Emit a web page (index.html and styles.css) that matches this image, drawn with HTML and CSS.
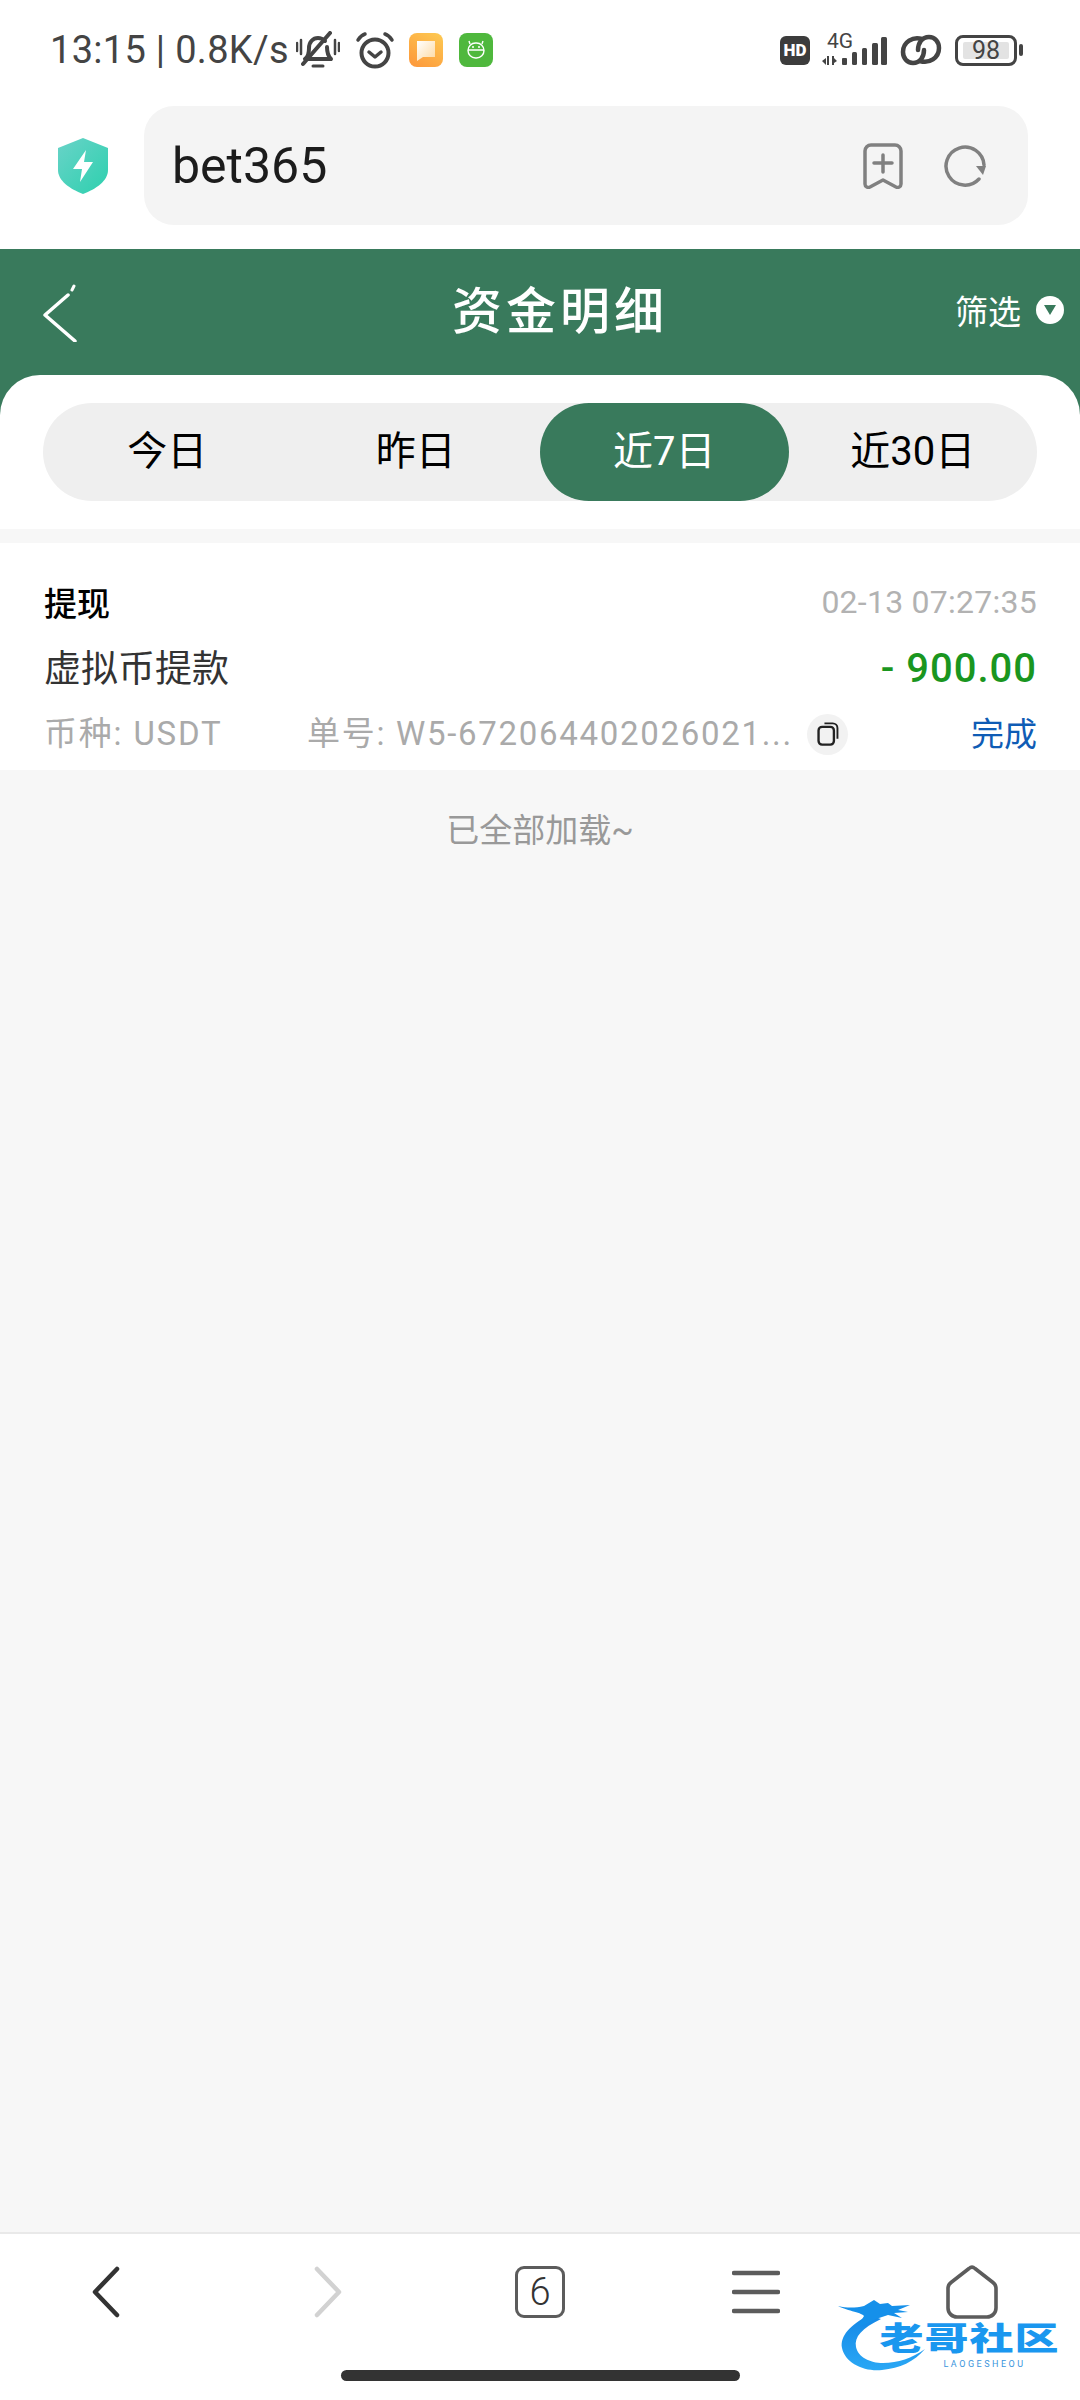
FILE: index.html
```html
<!DOCTYPE html>
<html>
	<head>
		<meta charset="utf-8">
		<title>资金明细</title>
		<link rel="stylesheet" href="styles.css">
	</head>
	<body>
		<div class="status-bar">
			<span class="status-text">13:15 | 0.8K/s</span>
			<svg class="ic-bell" viewBox="0 0 44 38" fill="none" stroke="#444" stroke-width="4" stroke-linecap="round" stroke-linejoin="round">
				<path d="M9 28c3-2 4-5 4-11 0-6 4-10 9-10 3 0 5 1 7 3"/>
				<path d="M31 16c0 6 1 9 4 12H11"/>
				<path d="M34 2 7 33"/>
				<path d="M17 35h10" stroke-width="3"/>
				<path d="M1 12v8M5 9v14M39 9v14M43 12v8" stroke-width="2.5"/>
			</svg>
			<svg class="ic-alarm" viewBox="0 0 40 38" fill="none" stroke="#444" stroke-linecap="round" stroke-linejoin="round">
				<circle cx="20" cy="22" r="13.5" stroke-width="4"/>
				<path d="m14 21 6 5 6-5" stroke-width="3.5"/>
				<path d="M3 9c2-3 4-5 7-6M37 9c-2-3-4-5-7-6" stroke-width="3.5"/>
			</svg>
			<svg class="ic-note" viewBox="0 0 34 34">
				<defs>
					<linearGradient id="noteBg" x1="0.8" y1="0" x2="0.2" y2="1">
						<stop offset="0" stop-color="#fdc650"/>
						<stop offset="1" stop-color="#fd9a3c"/>
					</linearGradient>
					<linearGradient id="noteFg" x1="0" y1="0" x2="1" y2="1">
						<stop offset="0" stop-color="#fff"/>
						<stop offset="1" stop-color="#fdd9a0"/>
					</linearGradient>
				</defs>
				<rect width="34" height="34" rx="8" fill="url(#noteBg)"/>
				<path d="M8 8h18v16H14l-6 4z" fill="url(#noteFg)"/>
			</svg>
			<svg class="ic-droid" viewBox="0 0 34 34" fill="none" stroke="#fff" stroke-width="1.4">
				<rect width="34" height="34" rx="8" fill="#4fb83d" stroke="none"/>
				<rect x="9" y="10" width="16" height="15" rx="7.5"/>
				<path d="M9 17h16M11 11 10 8M23 11l1-3"/>
				<circle cx="14" cy="14" r="1" fill="#fff" stroke="none"/>
				<circle cx="20" cy="14" r="1" fill="#fff" stroke="none"/>
			</svg>
			<div class="status-right">
				<span class="hd-badge">HD</span>
				<div class="signal">
					<span class="signal-label">4G</span>
					<svg class="ic-signal" viewBox="0 0 67 34" fill="#444">
						<path d="M0 27l4-3v7zM5 22h2v9H5zM10 22h2v9h-2zM12 24l3 3-3 2z"/>
						<rect x="20" y="24" width="5" height="7" rx="1"/>
						<rect x="30" y="18" width="5" height="13" rx="1.5"/>
						<rect x="40" y="14" width="5" height="17" rx="1.5"/>
						<rect x="50" y="9" width="6" height="22" rx="1.5"/>
						<rect x="59" y="3" width="6" height="28" rx="1.5"/>
					</svg>
				</div>
				<svg class="ic-link" viewBox="0 0 42 32" fill="none" stroke="#444" stroke-width="4.5" stroke-linecap="round">
					<path d="M22 5C13 2 3 8 3 18c0 6 4 11 10 11 7 0 11-6 11-13"/>
					<path d="M20 27c9 3 19-3 19-13 0-6-4-11-10-11-7 0-11 6-11 13"/>
				</svg>
				<div class="battery">
					<div class="battery-body"><span class="battery-level">98</span></div>
					<span class="battery-tip"></span>
				</div>
			</div>
		</div>

		<div class="url-row">
			<svg class="ic-shield" viewBox="0 0 50 56">
				<defs>
					<linearGradient id="shieldBg" x1="0" y1="0" x2="1" y2="1">
						<stop offset="0" stop-color="#69d3c8"/>
						<stop offset="1" stop-color="#2dd0ae"/>
					</linearGradient>
				</defs>
				<path d="M25 0 50 10v22c0 11-12 19-25 24C12 51 0 43 0 32V10z" fill="url(#shieldBg)"/>
				<path d="M28 12 15 31h9l-2 13 13-20h-9z" fill="#fff"/>
			</svg>
			<div class="url-box">
				<span class="url-text">bet365</span>
				<svg class="ic-bookmark" viewBox="0 0 40 46" fill="none" stroke="#808080" stroke-width="3.5" stroke-linecap="round" stroke-linejoin="round">
					<path d="M8 2h24a6 6 0 0 1 6 6v33c0 3-3 4-5 3l-13-7-13 7c-2 1-5 0-5-3V8a6 6 0 0 1 6-6z"/>
					<path d="M20 12v17M11 20h18"/>
				</svg>
				<svg class="ic-reload" viewBox="0 0 44 44" fill="none" stroke="#808080" stroke-width="3.5" stroke-linecap="round">
					<path d="M36 35A19 19 0 1 1 41 21"/>
					<path d="M33 22h10l-3 9z" fill="#808080" stroke="none"/>
				</svg>
			</div>
		</div>

		<div class="page-head">
			<svg class="ic-head-back" viewBox="0 0 34 58" fill="none" stroke="#fff" stroke-width="3.5" stroke-linecap="round" stroke-linejoin="round">
				<path d="M25 11 2 31l30 26"/>
				<path d="M29 6 31 2" stroke-width="3"/>
			</svg>
			<h1 class="page-title">资金明细</h1>
			<div class="filter">
				<span>筛选</span>
				<span class="filter-dot"><i class="filter-arrow"></i></span>
			</div>
		</div>

		<div class="tab-panel">
			<div class="tabs">
				<span class="tab">今日</span>
				<span class="tab">昨日</span>
				<span class="tab active">近7日</span>
				<span class="tab">近30日</span>
			</div>
		</div>

		<div class="content">
			<div class="record">
				<div class="record-row">
					<span class="record-type">提现</span>
					<span class="record-time">02-13 07:27:35</span>
				</div>
				<div class="record-row">
					<span class="record-name">虚拟币提款</span>
					<span class="record-amount">- 900.00</span>
				</div>
				<div class="record-row">
					<span class="record-coin">币种: USDT</span>
					<span class="record-no">单号: W5-672064402026021...</span>
					<span class="copy-btn">
						<svg viewBox="0 0 20 22" fill="none" stroke="#222" stroke-width="2">
							<rect x="2" y="5" width="13" height="15" rx="3"/>
							<path d="M7 2h7a4 4 0 0 1 4 4v9" stroke-width="1.6"/>
						</svg>
					</span>
					<span class="record-state">完成</span>
				</div>
			</div>
			<div class="load-end">已全部加载~</div>
		</div>

		<div class="bottom-nav">
			<div class="nav-icons">
				<span class="nav-item">
					<svg class="ic-prev" viewBox="0 0 28 52" fill="none" stroke="#333" stroke-width="4.5" stroke-linecap="round" stroke-linejoin="round"><path d="M25 3 3 26l22 23"/></svg>
				</span>
				<span class="nav-item">
					<svg class="ic-next" viewBox="0 0 28 52" fill="none" stroke="#d2d2d2" stroke-width="4.5" stroke-linecap="round" stroke-linejoin="round"><path d="m3 3 22 23L3 49"/></svg>
				</span>
				<span class="nav-item"><span class="tab-count">6</span></span>
				<span class="nav-item">
					<svg class="ic-menu" viewBox="0 0 48 44" fill="none" stroke="#5c5c5c" stroke-width="4.5" stroke-linecap="round"><path d="M2 3h44M2 22h44M2 41h44"/></svg>
				</span>
				<span class="nav-item">
					<svg class="ic-home" viewBox="0 0 52 54" fill="none" stroke="#5c5c5c" stroke-width="3.6" stroke-linejoin="round"><path d="M23 3.5c2-1.700 4-1.700 6 0l18 14c2 1.500 3 3.500 3 6V43a9 9 0 0 1-9 9H11a9 9 0 0 1-9-9V23.500c0-2.500 1-4.500 3-6z"/></svg>
				</span>
			</div>
			<div class="home-bar"></div>
			<div class="watermark">
				<svg class="dragon" viewBox="0 0 222 74">
					<defs>
						<linearGradient id="dragonBg" x1="0" y1="0" x2="0" y2="1">
							<stop offset="0" stop-color="#1487e6"/>
							<stop offset="1" stop-color="#2aa8f5"/>
						</linearGradient>
					</defs>
					<path d="M31 17C12 27 2 38 4 50c3 15 22 24 40 22 18-2 32-8 43-21-13 9-27 14-42 14-13 0-25-6-27-16-2-10 6-19 25-28z" fill="url(#dragonBg)"/>
					<path d="M0 8c9 2 17 2 26 0l10-6 6 4 8-1 4 3 18-1-12 5 10 2-14 1 8 5-14-3-12 4-12 6-6 1 6-10C25 15 10 13 0 8z" fill="#1590ea"/>
				</svg>
				<div class="wm-text">
					<span class="wm-name">老哥社区</span>
					<span class="wm-sub">LAOGESHEOU</span>
				</div>
			</div>
		</div>
	</body>
</html>
```

FILE: styles.css
```css
* {
	margin: 0;
	padding: 0;
	box-sizing: border-box;
}

body {
	width: 1080px;
	height: 2400px;
	display: flex;
	flex-direction: column;
	background-color: #fff;
	font-family: "Roboto", "Noto Sans CJK SC", sans-serif;
	overflow: hidden;
}

svg {
	display: block;
	flex: none;
}

/* status bar */
.status-bar {
	height: 100px;
	display: flex;
	align-items: center;
	padding: 0 57px 0 50px;
}

.status-text {
	font-size: 38px;
	line-height: 100px;
	letter-spacing: 0.3px;
	color: #444;
	width: 246px;
	white-space: nowrap;
}

.ic-bell {
	width: 44px;
	height: 38px;
}

.ic-alarm {
	width: 40px;
	height: 38px;
	margin-left: 15px;
}

.ic-note {
	width: 34px;
	height: 34px;
	margin-left: 14px;
}

.ic-droid {
	width: 34px;
	height: 34px;
	margin-left: 16px;
}

.status-right {
	margin-left: auto;
	display: flex;
	align-items: center;
}

.hd-badge {
	width: 30px;
	height: 29px;
	border-radius: 6px;
	background-color: #3c3c3c;
	color: #fff;
	font-size: 17px;
	font-weight: 900;
	line-height: 29px;
	text-align: center;
}

.signal {
	position: relative;
	width: 67px;
	height: 36px;
	margin-left: 12px;
}

.signal-label {
	position: absolute;
	left: 5px;
	top: -1px;
	font-size: 21px;
	line-height: 20px;
	color: #444;
}

.ic-signal {
	width: 67px;
	height: 34px;
	margin-top: 2px;
}

.ic-link {
	width: 42px;
	height: 32px;
	margin-left: 11px;
}

.battery {
	display: flex;
	align-items: center;
	margin-left: 13px;
}

.battery-body {
	width: 62px;
	height: 31px;
	border: 3px solid #444;
	border-radius: 8px;
	padding: 4px 5px;
}

.battery-level {
	display: block;
	height: 17px;
	background-color: #e3e3e3;
	border-radius: 2px;
	font-size: 25px;
	line-height: 17px;
	color: #444;
	text-align: center;
}

.battery-tip {
	width: 4px;
	height: 12px;
	margin-left: 2px;
	border-radius: 2px;
	background-color: #444;
}

/* url row */
.url-row {
	height: 149px;
	display: flex;
	align-items: flex-start;
	padding: 6px 52px 0 58px;
}

.ic-shield {
	width: 50px;
	height: 56px;
	margin-top: 32px;
}

.url-box {
	width: 884px;
	height: 119px;
	margin-left: 36px;
	border-radius: 30px;
	background-color: #f4f4f4;
	display: flex;
	align-items: center;
	padding: 0 41px 0 28px;
}

.url-text {
	font-size: 50px;
	color: #1c1c1c;
	flex: 1;
}

.ic-bookmark {
	width: 40px;
	height: 46px;
}

.ic-reload {
	width: 44px;
	height: 44px;
	margin-left: 40px;
}

/* green head */
.page-head {
	height: 166px;
	padding: 0 16px 40px 43px;
	background-color: #397a5c;
	display: flex;
	align-items: center;
	color: #fff;
	position: relative;
}

.ic-head-back {
	width: 34px;
	height: 58px;
	margin-top: 2px;
}

.page-title {
	position: absolute;
	left: 0;
	right: 0;
	top: 35px;
	padding-left: 40px;
	text-align: center;
	font-size: 50px;
	line-height: 56px;
	font-weight: 500;
	letter-spacing: 4px;
}

.filter {
	margin-left: auto;
	margin-top: -4px;
	display: flex;
	align-items: center;
	font-size: 33px;
}

.filter-dot {
	width: 28px;
	height: 28px;
	margin-left: 15px;
	border-radius: 50%;
	background-color: #fff;
	display: flex;
	align-items: center;
	justify-content: center;
}

.filter-arrow {
	width: 0;
	height: 0;
	border-left: 6px solid transparent;
	border-right: 6px solid transparent;
	border-top: 10px solid #397a5c;
}

/* tabs */
.tab-panel {
	height: 154px;
	margin-top: -40px;
	padding: 28px 43px 0;
	background-color: #fff;
	border-radius: 40px 40px 0 0;
	position: relative;
}

.tabs {
	height: 98px;
	border-radius: 49px;
	background-color: #efefef;
	display: grid;
	grid-template-columns: repeat(4, 1fr);
}

.tab {
	border-radius: 49px;
	font-size: 40px;
	line-height: 98px;
	text-align: center;
	color: #000;
}

.tab.active {
	background-color: #397a5c;
	color: #fff;
}

/* list */
.content {
	flex: 1;
	padding-top: 14px;
	background-color: #f7f7f7;
}

.record {
	height: 227px;
	padding: 26px 43px 0 44px;
	background-color: #fff;
}

.record-row {
	height: 66px;
	display: flex;
	align-items: center;
	justify-content: space-between;
}

.record-type {
	font-size: 33px;
	font-weight: 500;
	color: #000;
}

.record-time {
	font-size: 32px;
	letter-spacing: 0.25px;
	color: #b2b2b2;
}

.record-name {
	margin-top: -5px;
	font-size: 37px;
	color: #333;
}

.record-amount {
	font-size: 40px;
	letter-spacing: 1px;
	font-weight: 500;
	color: #1a961f;
}

.record-coin {
	width: 263px;
	margin-top: -6px;
	font-size: 33px;
	letter-spacing: 1.8px;
	color: #aaa;
	white-space: nowrap;
}

.record-no {
	width: 500px;
	margin-top: -6px;
	font-size: 33px;
	letter-spacing: 1.7px;
	color: #aaa;
	white-space: nowrap;
}

.copy-btn {
	width: 41px;
	height: 41px;
	border-radius: 50%;
	background-color: #f2f2f2;
	display: flex;
	align-items: center;
	justify-content: center;
}

.copy-btn svg {
	width: 24px;
	height: 26px;
}

.record-state {
	margin-left: auto;
	margin-top: -4px;
	font-size: 33px;
	color: #0f5cb5;
}

.load-end {
	padding-top: 38px;
	font-size: 33px;
	line-height: 46px;
	color: #999;
	text-align: center;
}

/* bottom */
.bottom-nav {
	height: 168px;
	border-top: 2px solid #e9e9e9;
	background-color: #fff;
	position: relative;
}

.nav-icons {
	height: 136px;
	padding-bottom: 20px;
	display: grid;
	grid-template-columns: repeat(5, 216px);
}

.nav-item {
	display: flex;
	align-items: center;
	justify-content: center;
}

.ic-prev {
	width: 28px;
	height: 52px;
	margin-right: 4px;
}

.ic-next {
	width: 28px;
	height: 52px;
	margin-left: 8px;
}

.tab-count {
	width: 50px;
	height: 52px;
	border: 3px solid #5c5c5c;
	border-radius: 9px;
	font-size: 38px;
	font-weight: 300;
	line-height: 46px;
	text-align: center;
	color: #333;
}

.ic-menu {
	width: 48px;
	height: 44px;
}

.ic-home {
	width: 52px;
	height: 54px;
}

.home-bar {
	width: 399px;
	height: 11px;
	margin: 0 auto;
	border-radius: 6px;
	background-color: #333;
}

/* watermark over the nav */
.watermark {
	position: absolute;
	left: 838px;
	top: 64px;
	width: 222px;
	height: 74px;
}

.dragon {
	width: 222px;
	height: 74px;
}

.wm-text {
	position: absolute;
	left: 41px;
	top: 26px;
	width: 181px;
	display: flex;
	flex-direction: column;
	align-items: center;
}

.wm-name {
	font-family: "Roboto", "Noto Sans CJK SC", sans-serif;
	font-size: 44px;
	line-height: 30px;
	font-weight: 900;
	letter-spacing: 1px;
	color: #1a97ef;
	white-space: nowrap;
	transform: scaleY(0.72);
}

.wm-sub {
	margin-top: 6px;
	margin-left: 30px;
	font-size: 9px;
	line-height: 8px;
	letter-spacing: 2.5px;
	color: #3a95dc;
	white-space: nowrap;
}
```
